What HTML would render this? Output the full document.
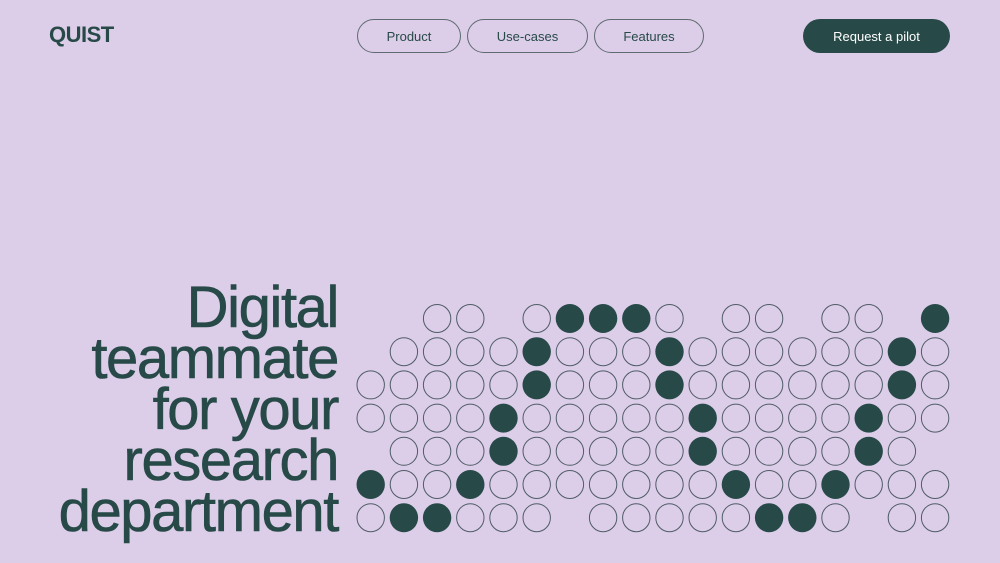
<!DOCTYPE html>
<html><head><meta charset="utf-8"><style>
*{margin:0;padding:0;box-sizing:border-box}
body{width:1000px;height:563px;background:#dccde8;font-family:"Liberation Sans",sans-serif;position:relative;overflow:hidden;color:#274a48}
.logo{position:absolute;left:49px;top:22px;font-size:22px;font-weight:bold;letter-spacing:-0.5px;color:#274a48}
.pill{position:absolute;top:19px;height:34px;border:1px solid #5f6b6e;border-radius:17px;font-size:13px;display:flex;align-items:center;justify-content:center;color:#274a48}
.btn{position:absolute;left:803px;top:19px;width:147px;height:34px;border-radius:17px;background:#274a48;color:#fff;font-size:13px;display:flex;align-items:center;justify-content:center}
.h{position:absolute;right:662px;top:282px;text-align:right;font-size:58px;line-height:51px;letter-spacing:-1.4px;color:#274a48;-webkit-text-stroke:0.6px #274a48}
svg{position:absolute;left:0;top:0}
</style></head><body>
<div class="logo">QUIST</div>
<div class="pill" style="left:357px;width:104px">Product</div>
<div class="pill" style="left:467px;width:121px">Use-cases</div>
<div class="pill" style="left:594px;width:110px">Features</div>
<div class="btn">Request a pilot</div>
<div class="h">Digital<br>teammate<br>for your<br>research<br>department</div>
<svg width="1000" height="563" id="g"></svg>
<script>
var rows=[
"..oo.oXXXo.oo.oo.X",
".ooooXoooXooooooXo",
"oooooXoooXooooooXo",
"ooooXoooooXooooXoo",
".oooXoooooXooooXo.",
"XooXoooooooXooXooo",
"oXXooo.oooooXXo.oo"];
var s='';
for(var r=0;r<7;r++){var row=rows[r];for(var c=0;c<18;c++){var ch=row[c];if(!ch||ch=='.')continue;var x=370.7+c*33.2,y=318.5+r*33.2;
if(ch=='X')s+='<ellipse cx="'+x+'" cy="'+y+'" rx="14.2" ry="14.5" fill="#274a48"/>';
else s+='<ellipse cx="'+x+'" cy="'+y+'" rx="13.7" ry="14" fill="none" stroke="#4f5c66" stroke-width="1"/>';}}
document.getElementById('g').innerHTML=s;
</script>
</body></html>
